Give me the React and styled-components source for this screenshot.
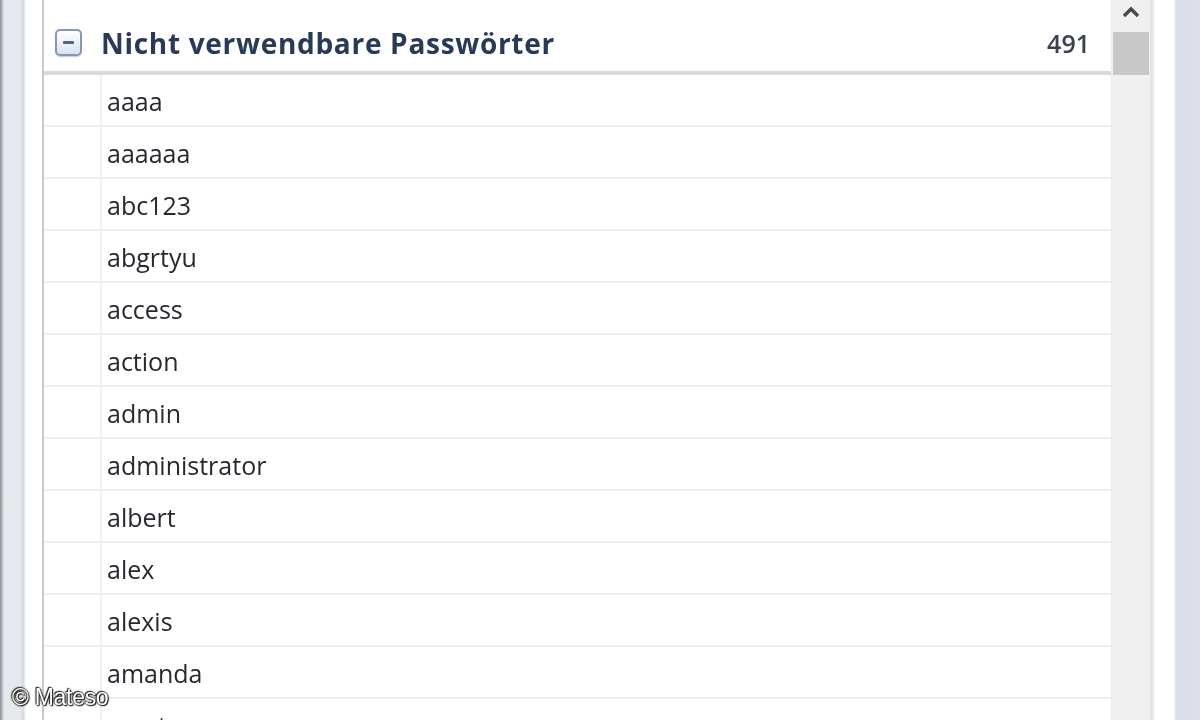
import React from "react";
import styled, { createGlobalStyle } from "styled-components";

const GlobalStyle = createGlobalStyle`
  html, body {
    margin: 0;
    padding: 0;
    background: #ffffff;
  }
`;

// whole window area, blurred a little like the scaled-up screenshot
const Screen = styled.div`
  position: relative;
  width: 1200px;
  height: 720px;
  overflow: hidden;
  display: flex;
  flex-direction: row;
  background: #ffffff;
  filter: blur(0.6px);
  font-family: "Open Sans", "Noto Sans", sans-serif;
`;

const LeftFrame = styled.div`
  width: 44px;
  flex-shrink: 0;
  background: linear-gradient(
    to right,
    #8c9198 0px,
    #c9cdd3 3px,
    #e7e9ed 4px,
    #e4e7eb 21px,
    #d2d6dc 23px,
    #ffffff 26px,
    #ffffff 42px,
    #c6cacf 42px,
    #c6cacf 44px
  );
`;

const ListPanel = styled.div`
  flex: 1;
  display: flex;
  flex-direction: column;
  min-width: 0;
`;

const GroupHeader = styled.div`
  height: 75px;
  flex-shrink: 0;
  display: flex;
  align-items: center;
  padding: 14px 21px 0 11px;
  box-sizing: border-box;
  border-bottom: 4px solid #d6dade;
`;

const CollapseBox = styled.span`
  position: relative;
  width: 23px;
  height: 23px;
  border: 2px solid #8797b3;
  border-radius: 5px;
  background: linear-gradient(to bottom, #ffffff, #dbe2ee);
  box-shadow: 0 1px 1px rgba(60, 80, 110, 0.3);
  flex-shrink: 0;

  &::after {
    content: "";
    position: absolute;
    left: 6px;
    right: 6px;
    top: 10px;
    height: 3px;
    background: #52648a;
    border-radius: 1px;
  }
`;

const GroupTitle = styled.span`
  margin-left: 19px;
  font-weight: 700;
  font-size: 28px;
  color: #283a56;
  flex: 1;
  letter-spacing: 0.7px;
`;

const GroupCount = styled.span`
  font-size: 25px;
  font-weight: 600;
  color: #3a4250;
`;

const Row = styled.div`
  height: 52px;
  flex-shrink: 0;
  display: flex;
  box-sizing: border-box;
  border-bottom: 2px solid #eeeeee;
`;

const IndentCell = styled.div`
  width: 56px;
  flex-shrink: 0;
  border-right: 2px solid #f0f0f0;
`;

const ItemText = styled.div`
  padding: 2px 0 0 5px;
  display: flex;
  align-items: center;
  font-size: 25px;
  color: #26292f;
`;

const ScrollBar = styled.div`
  width: 38px;
  flex-shrink: 0;
  display: flex;
  flex-direction: column;
  align-items: center;
  background: #f0f0f0;
  border-left: 1px solid #ececec;
`;

const ArrowButton = styled.div`
  height: 32px;
  width: 100%;
  display: flex;
  align-items: center;
  justify-content: center;
  padding-bottom: 8px;
  box-sizing: border-box;
`;

const Thumb = styled.div`
  width: 36px;
  height: 43px;
  background: #c8c8c8;
`;

const RightFrame = styled.div`
  width: 50px;
  flex-shrink: 0;
  background: linear-gradient(
    to right,
    #dfe2e6 0px,
    #e6e8eb 3px,
    #ffffff 5px,
    #ffffff 24px,
    #d9dde5 26px,
    #dde0e8 50px
  );
`;

const Watermark = styled.div`
  position: absolute;
  left: 12px;
  bottom: 9px;
  font-family: "Liberation Sans", Arial, sans-serif;
  font-size: 23px;
  letter-spacing: -0.3px;
  color: #ffffff;
  text-shadow: 0 0 2px #1a1a1a, 0 0 2px #1a1a1a, 1px 1px 1px #1a1a1a,
    -1px -1px 1px #333;
`;

const passwords = [
  "aaaa",
  "aaaaaa",
  "abc123",
  "abgrtyu",
  "access",
  "action",
  "admin",
  "administrator",
  "albert",
  "alex",
  "alexis",
  "amanda",
  "amateur",
  "america",
];

function App() {
  return (
    <>
      <GlobalStyle />
      <Screen>
        <LeftFrame />
        <ListPanel>
          <GroupHeader>
            <CollapseBox />
            <GroupTitle>Nicht verwendbare Passwörter</GroupTitle>
            <GroupCount>491</GroupCount>
          </GroupHeader>
          {passwords.map(pw => (
            <Row key={pw}>
              <IndentCell />
              <ItemText>{pw}</ItemText>
            </Row>
          ))}
        </ListPanel>
        <ScrollBar>
          <ArrowButton>
            <svg width="20" height="12" viewBox="0 0 20 12">
              <polyline
                points="3,10 10,3 17,10"
                fill="none"
                stroke="#4a4a4a"
                strokeWidth="3.5"
              />
            </svg>
          </ArrowButton>
          <Thumb />
        </ScrollBar>
        <RightFrame />
        <Watermark>© Mateso</Watermark>
      </Screen>
    </>
  );
}

export default App;
